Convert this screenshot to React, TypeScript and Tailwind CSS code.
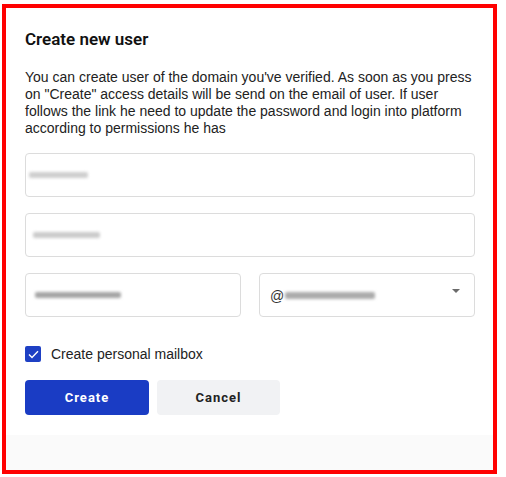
import React from 'react';

const Blur = ({ className }: { className: string }) => (
  <div className={`rounded-[2px] blur-[1.5px] ${className}`} />
);

const App: React.FC = () => {
  return (
    <div className="w-[506px] h-[477px] bg-white pt-[4px] pl-[2px] font-['Liberation_Sans',Arial,sans-serif]">
      <div className="w-[495px] h-[470px] border-4 border-[#ff0000] flex flex-col">
        <div className="bg-white pl-[19px] pr-[18px] pt-[21px] pb-[20px]">
          <h2 className="text-[17px] leading-[20px] font-semibold text-[#111] font-['Roboto',sans-serif]">Create new user</h2>
          <p className="mt-[20px] text-[14px] leading-[17px] text-[#222]">
            You can create user of the domain you've verified. As soon as you press on "Create" access details will be send on the email of user. If user follows the link he need to update the password and login into platform according to permissions he has
          </p>

          <div className="mt-[16px] flex flex-col gap-[16px]">
            <div className="h-[44px] border border-[#dcdcdc] rounded-[4px] flex items-center pl-[3px]">
              <Blur className="w-[59px] h-[6px] bg-[#cfcfcf]" />
            </div>
            <div className="h-[44px] border border-[#dcdcdc] rounded-[4px] flex items-center pl-[7px]">
              <Blur className="w-[67px] h-[6px] bg-[#cbcbcb]" />
            </div>
            <div className="grid grid-cols-2 gap-[18px]">
              <div className="h-[44px] border border-[#dcdcdc] rounded-[4px] flex items-center pl-[9px]">
                <Blur className="w-[86px] h-[6px] bg-[#a5a5a5]" />
              </div>
              <div className="h-[44px] border border-[#dcdcdc] rounded-[4px] flex items-center pl-[10px] pr-[14px]">
                <span className="text-[14px] text-[#333] leading-none mt-[1px]">@</span>
                <Blur className="ml-[1px] w-[90px] h-[7px] bg-[#ababab]" />
                <div className="ml-auto mb-[8px] w-0 h-0 border-l-[4px] border-r-[4px] border-t-[4px] border-l-transparent border-r-transparent border-t-[#6b6b6b]" />
              </div>
            </div>
          </div>

          <label className="mt-[29px] flex items-center gap-[10px]">
            <span className="w-[16px] h-[16px] rounded-[2px] bg-[#1e40c4] flex items-center justify-center">
              <svg width="11" height="9" viewBox="0 0 11 9" fill="none">
                <path d="M1 4.5 L4 7.5 L10 1.2" stroke="white" strokeWidth="1.4" />
              </svg>
            </span>
            <span className="text-[14px] text-[#222] leading-[16px]">Create personal mailbox</span>
          </label>

          <div className="mt-[18px] flex gap-[8px] font-['Roboto',sans-serif]">
            <button className="w-[124px] h-[35px] rounded-[4px] bg-[#1a3cc4] text-white text-[13px] font-bold tracking-[1px]">Create</button>
            <button className="w-[123px] h-[35px] rounded-[4px] bg-[#f1f2f4] text-[#222] text-[13px] font-bold tracking-[1px]">Cancel</button>
          </div>
        </div>
        <div className="flex-1 bg-[#fafafa]" />
      </div>
    </div>
  );
};

export default App;
